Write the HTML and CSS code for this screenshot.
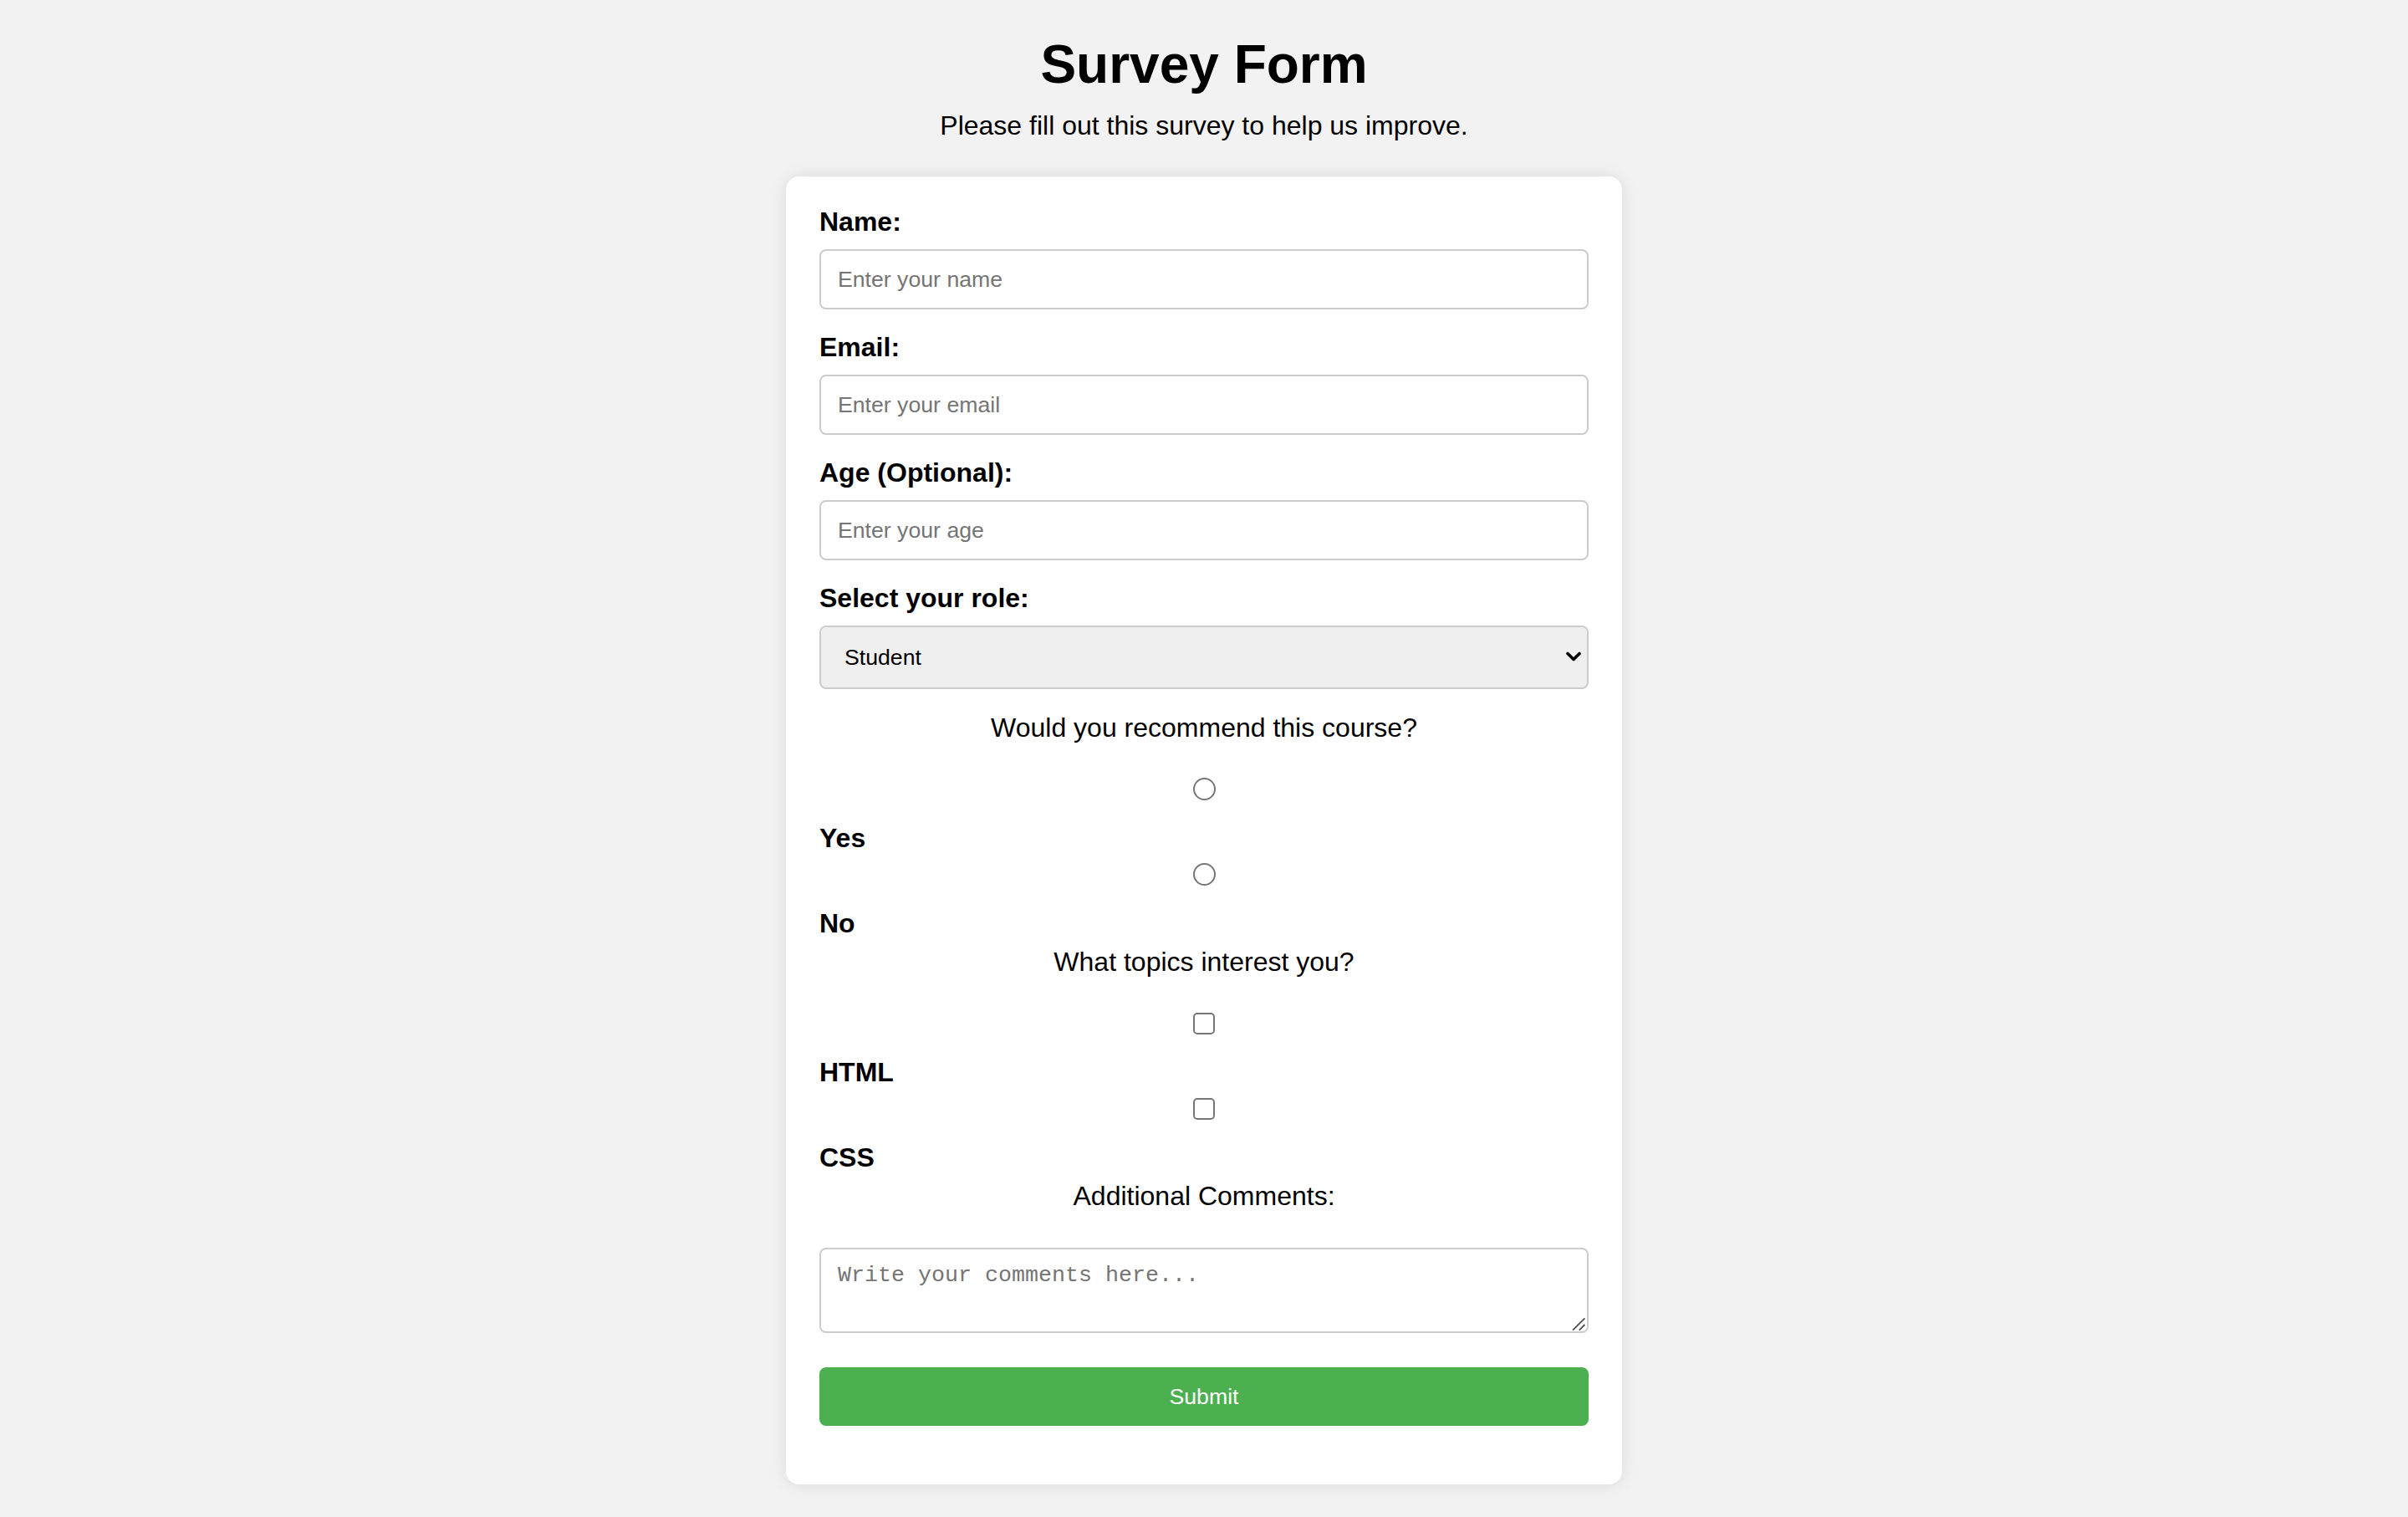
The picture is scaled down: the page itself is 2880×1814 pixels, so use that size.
FILE: index.html
```html
<!DOCTYPE html>
<html lang="en">
<head>
<meta charset="utf-8">
<title>Survey Form</title>
<link rel="stylesheet" href="styles.css">
</head>
<body>
  <h1 class="title">Survey Form</h1>
  <p class="intro">Please fill out this survey to help us improve.</p>
  <form class="card">
    <label class="field-label" for="name">Name:</label>
    <input class="text-input" id="name" type="text" placeholder="Enter your name">

    <label class="field-label" for="email">Email:</label>
    <input class="text-input" id="email" type="email" placeholder="Enter your email">

    <label class="field-label" for="age">Age (Optional):</label>
    <input class="text-input" id="age" type="number" placeholder="Enter your age">

    <label class="field-label" for="role">Select your role:</label>
    <div class="select-wrap">
      <select class="select" id="role">
        <option>Student</option>
        <option>Professional</option>
        <option>Other</option>
      </select>
      <svg class="select-arrow" width="18" height="12" viewBox="0 0 18 12" aria-hidden="true">
        <path d="M2 2.5 L9 9.5 L16 2.5" fill="none" stroke="#000" stroke-width="3.6" stroke-linecap="round" stroke-linejoin="round"/>
      </svg>
    </div>

    <p class="question">Would you recommend this course?</p>
    <input class="radio" type="radio" name="recommend" id="rec-yes">
    <label class="choice-label" for="rec-yes">Yes</label>
    <input class="radio" type="radio" name="recommend" id="rec-no">
    <label class="choice-label choice-label--end" for="rec-no">No</label>

    <p class="question">What topics interest you?</p>
    <input class="checkbox" type="checkbox" id="topic-html">
    <label class="choice-label" for="topic-html">HTML</label>
    <input class="checkbox" type="checkbox" id="topic-css">
    <label class="choice-label choice-label--end" for="topic-css">CSS</label>

    <p class="question">Additional Comments:</p>
    <div class="textarea-wrap">
      <textarea class="comments" placeholder="Write your comments here..."></textarea>
      <svg class="resize-handle" width="20" height="20" viewBox="0 0 20 20" aria-hidden="true">
        <path d="M3 16.6 L17.4 2.3 M10.7 16.6 L17.4 10" fill="none" stroke="#4d4d4d" stroke-width="1.8"/>
      </svg>
    </div>

    <button class="submit" type="submit">Submit</button>
  </form>
</body>
</html>
```

FILE: styles.css
```css
* {
  box-sizing: border-box;
}

body {
  margin: 0;
  background: #f2f2f2;
  font-family: "Liberation Sans", Arial, sans-serif;
  color: #000;
}

.title {
  margin: 40px 0 18px;
  font-size: 64px;
  font-weight: bold;
  text-align: center;
  line-height: normal;
}

.intro {
  margin: 0 0 42px;
  font-size: 32px;
  text-align: center;
  line-height: normal;
}

.card {
  display: flex;
  flex-direction: column;
  width: 1000px;
  margin: 0 auto 40px;
  padding: 39px 40px 70px;
  background: #fff;
  border-radius: 16px;
  box-shadow: 0 0 20px rgba(0, 0, 0, 0.1);
}

.field-label {
  display: block;
  margin: 0 0 18px;
  font-size: 32px;
  font-weight: bold;
  line-height: 30px;
}

.text-input {
  display: block;
  width: 100%;
  height: 72px;
  margin: 0 0 30px;
  padding: 0 20px;
  border: 2px solid #ccc;
  border-radius: 8px;
  background: #fff;
  font-family: "Liberation Sans", Arial, sans-serif;
  font-size: 26.67px;
  color: #000;
  outline: none;
}

.text-input::placeholder {
  color: #757575;
}

.select-wrap {
  position: relative;
  margin: 0 0 28px;
}

.select {
  display: block;
  width: 100%;
  height: 76px;
  padding: 0 20px 0 28px;
  border: 2px solid #ccc;
  border-radius: 8px;
  background: #efefef;
  font-family: "Liberation Sans", Arial, sans-serif;
  font-size: 26.67px;
  color: #000;
  appearance: none;
  -webkit-appearance: none;
  outline: none;
}

.select-arrow {
  position: absolute;
  right: 9px;
  top: 31px;
  pointer-events: none;
}

.question {
  margin: 0 0 44px;
  font-size: 32px;
  line-height: 36px;
  text-align: center;
}

.radio,
.checkbox {
  display: block;
  margin: 0 auto 26px;
  appearance: none;
  -webkit-appearance: none;
  background: #fff;
  border: 2.5px solid #767676;
}

.radio {
  width: 27px;
  height: 27px;
  margin-top: -2px;
  margin-bottom: 28px;
  border-radius: 50%;
}

.checkbox {
  width: 26px;
  height: 26px;
  margin-top: -1px;
  margin-bottom: 28px;
  border-radius: 5px;
}

.choice-label {
  display: block;
  margin: 0 0 15px;
  font-size: 32px;
  font-weight: bold;
  line-height: 34px;
}

.choice-label--end {
  margin-bottom: 11px;
}

.textarea-wrap {
  position: relative;
  margin: 0 0 41px;
}

.comments {
  display: block;
  width: 100%;
  height: 102px;
  padding: 16px 20px 20px;
  border: 2px solid #ccc;
  border-radius: 8px;
  font-family: "Liberation Mono", "Courier New", monospace;
  font-size: 26.67px;
  color: #000;
  resize: none;
  outline: none;
}

.comments::placeholder {
  color: #757575;
}

.resize-handle {
  position: absolute;
  right: 2px;
  bottom: 0;
  pointer-events: none;
}

.submit {
  display: block;
  width: 100%;
  height: 70px;
  padding: 0;
  border: none;
  border-radius: 8px;
  background: #4caf50;
  color: #fff;
  font-family: "Liberation Sans", Arial, sans-serif;
  font-size: 26.67px;
  cursor: pointer;
}
```
